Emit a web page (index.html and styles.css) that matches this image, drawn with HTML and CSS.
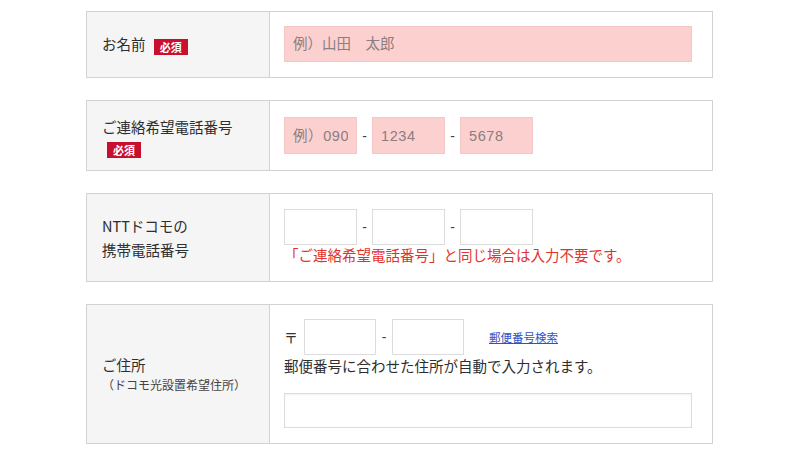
FILE: index.html
```html
<!DOCTYPE html>
<html lang="ja">
<head>
<meta charset="utf-8">
<title>フォーム</title>
<link rel="stylesheet" href="styles.css">
</head>
<body>
<div class="form">
  <div class="row">
    <div class="label">
      <div class="label-line">お名前 <span class="badge">必須</span></div>
    </div>
    <div class="field field-r1">
      <input class="input input-pink input-wide" type="text" placeholder="例）山田　太郎">
    </div>
  </div>

  <div class="row">
    <div class="label label-r2">
      <div class="label-line">ご連絡希望電話番号 <span class="badge">必須</span></div>
    </div>
    <div class="field field-r2">
      <div class="tel">
        <input class="input input-pink input-tel" type="text" placeholder="例）090">
        <span class="dash">-</span>
        <input class="input input-pink input-tel" type="text" placeholder="1234">
        <span class="dash">-</span>
        <input class="input input-pink input-tel" type="text" placeholder="5678">
      </div>
    </div>
  </div>

  <div class="row">
    <div class="label label-r3">
      <div>NTTドコモの</div>
      <div>携帯電話番号</div>
    </div>
    <div class="field field-r3">
      <div class="tel">
        <input class="input input-plain input-tel" type="text">
        <span class="dash">-</span>
        <input class="input input-plain input-tel" type="text">
        <span class="dash">-</span>
        <input class="input input-plain input-tel" type="text">
      </div>
      <p class="note-red">「ご連絡希望電話番号」と同じ場合は入力不要です。</p>
    </div>
  </div>

  <div class="row">
    <div class="label label-r4">
      <div class="l4-main">ご住所</div>
      <div class="l4-sub">（ドコモ光設置希望住所）</div>
    </div>
    <div class="field field-r4">
      <div class="zip">
        <span class="zip-mark">〒</span>
        <input class="input input-plain input-zip" type="text">
        <span class="dash dash-zip">-</span>
        <input class="input input-plain input-zip" type="text">
        <a class="zip-link" href="#">郵便番号検索</a>
      </div>
      <p class="note">郵便番号に合わせた住所が自動で入力されます。</p>
      <input class="input input-plain input-wide input-addr" type="text">
    </div>
  </div>
</div>
</body>
</html>
```

FILE: styles.css
```css
* { box-sizing: border-box; }

html, body {
  margin: 0;
  padding: 0;
  background: #ffffff;
}

body {
  font-family: "Noto Sans CJK JP", "Noto Sans", sans-serif;
  font-size: 14.5px;
  color: #2e2e2e;
}

.form {
  margin: 11px 0 0 86px;
  width: 627px;
  display: flex;
  flex-direction: column;
  gap: 22px;
}

.row {
  display: flex;
  border: 1px solid #d2d2d2;
}

.label {
  width: 183px;
  flex: none;
  background: #f5f5f5;
  border-right: 1px solid #d2d2d2;
  padding: 0 10px 0 15px;
  display: flex;
  flex-direction: column;
  justify-content: center;
  line-height: 20px;
}

.label-r2 { padding-top: 3px; }
.label-r3 { line-height: 24px; }

.l4-main { line-height: 22px; }
.l4-sub {
  font-size: 12px;
  line-height: 18px;
  color: #444;
}

.badge {
  display: inline-block;
  background: #c8102e;
  color: #ffffff;
  font-size: 11px;
  font-weight: bold;
  line-height: 16px;
  height: 16px;
  padding: 0 6px;
  margin-left: 5px;
  vertical-align: -2px;
}

.field {
  flex: 1;
  padding: 14px 20px 15px 14px;
}
.field-r1 { padding-top: 14px; padding-bottom: 15px; }
.field-r2 { padding-top: 16px; padding-bottom: 16px; }
.field-r3 { padding-top: 15px; padding-bottom: 16px; }
.field-r4 { padding-top: 14px; padding-bottom: 15px; }

.input {
  display: block;
  font-family: "Liberation Sans", "Noto Sans CJK JP", sans-serif;
  font-size: 14.5px;
  color: #333;
  padding: 0 8px;
  margin: 0;
  outline: none;
  border-radius: 0;
}

.input-pink {
  background: #fdd0d0;
  border: 1px solid #f4c6c6;
}
.input-pink::placeholder { color: #8a7e7e; }
.input-tel::placeholder { letter-spacing: 0.6px; }

.input-plain {
  background: #ffffff;
  border: 1px solid #dcdcdc;
}

.input-wide {
  width: 408px;
  height: 36px;
}

.input-tel {
  width: 73px;
  height: 36px;
}
.field-r2 .input-tel { height: 37px; }

.tel, .zip {
  display: flex;
  align-items: center;
}

.dash {
  width: 15px;
  text-align: center;
  font-family: "Liberation Sans", sans-serif;
  font-size: 14px;
  color: #444;
}

.note-red {
  margin: 0;
  line-height: 20px;
  color: #e2332b;
}

.zip-mark {
  width: 20px;
  font-size: 14px;
  color: #333;
}

.input-zip {
  width: 72px;
  height: 36px;
}

.dash-zip { width: 16px; }

.zip-link {
  margin-left: 25px;
  font-size: 11.5px;
  color: #2d54c4;
  text-decoration: underline;
}

.note {
  margin: 1px 0 0 0;
  line-height: 20px;
}

.input-addr {
  margin-top: 17px;
  height: 35px;
  box-shadow: inset 0 1px 2px rgba(0,0,0,0.06);
}
```
